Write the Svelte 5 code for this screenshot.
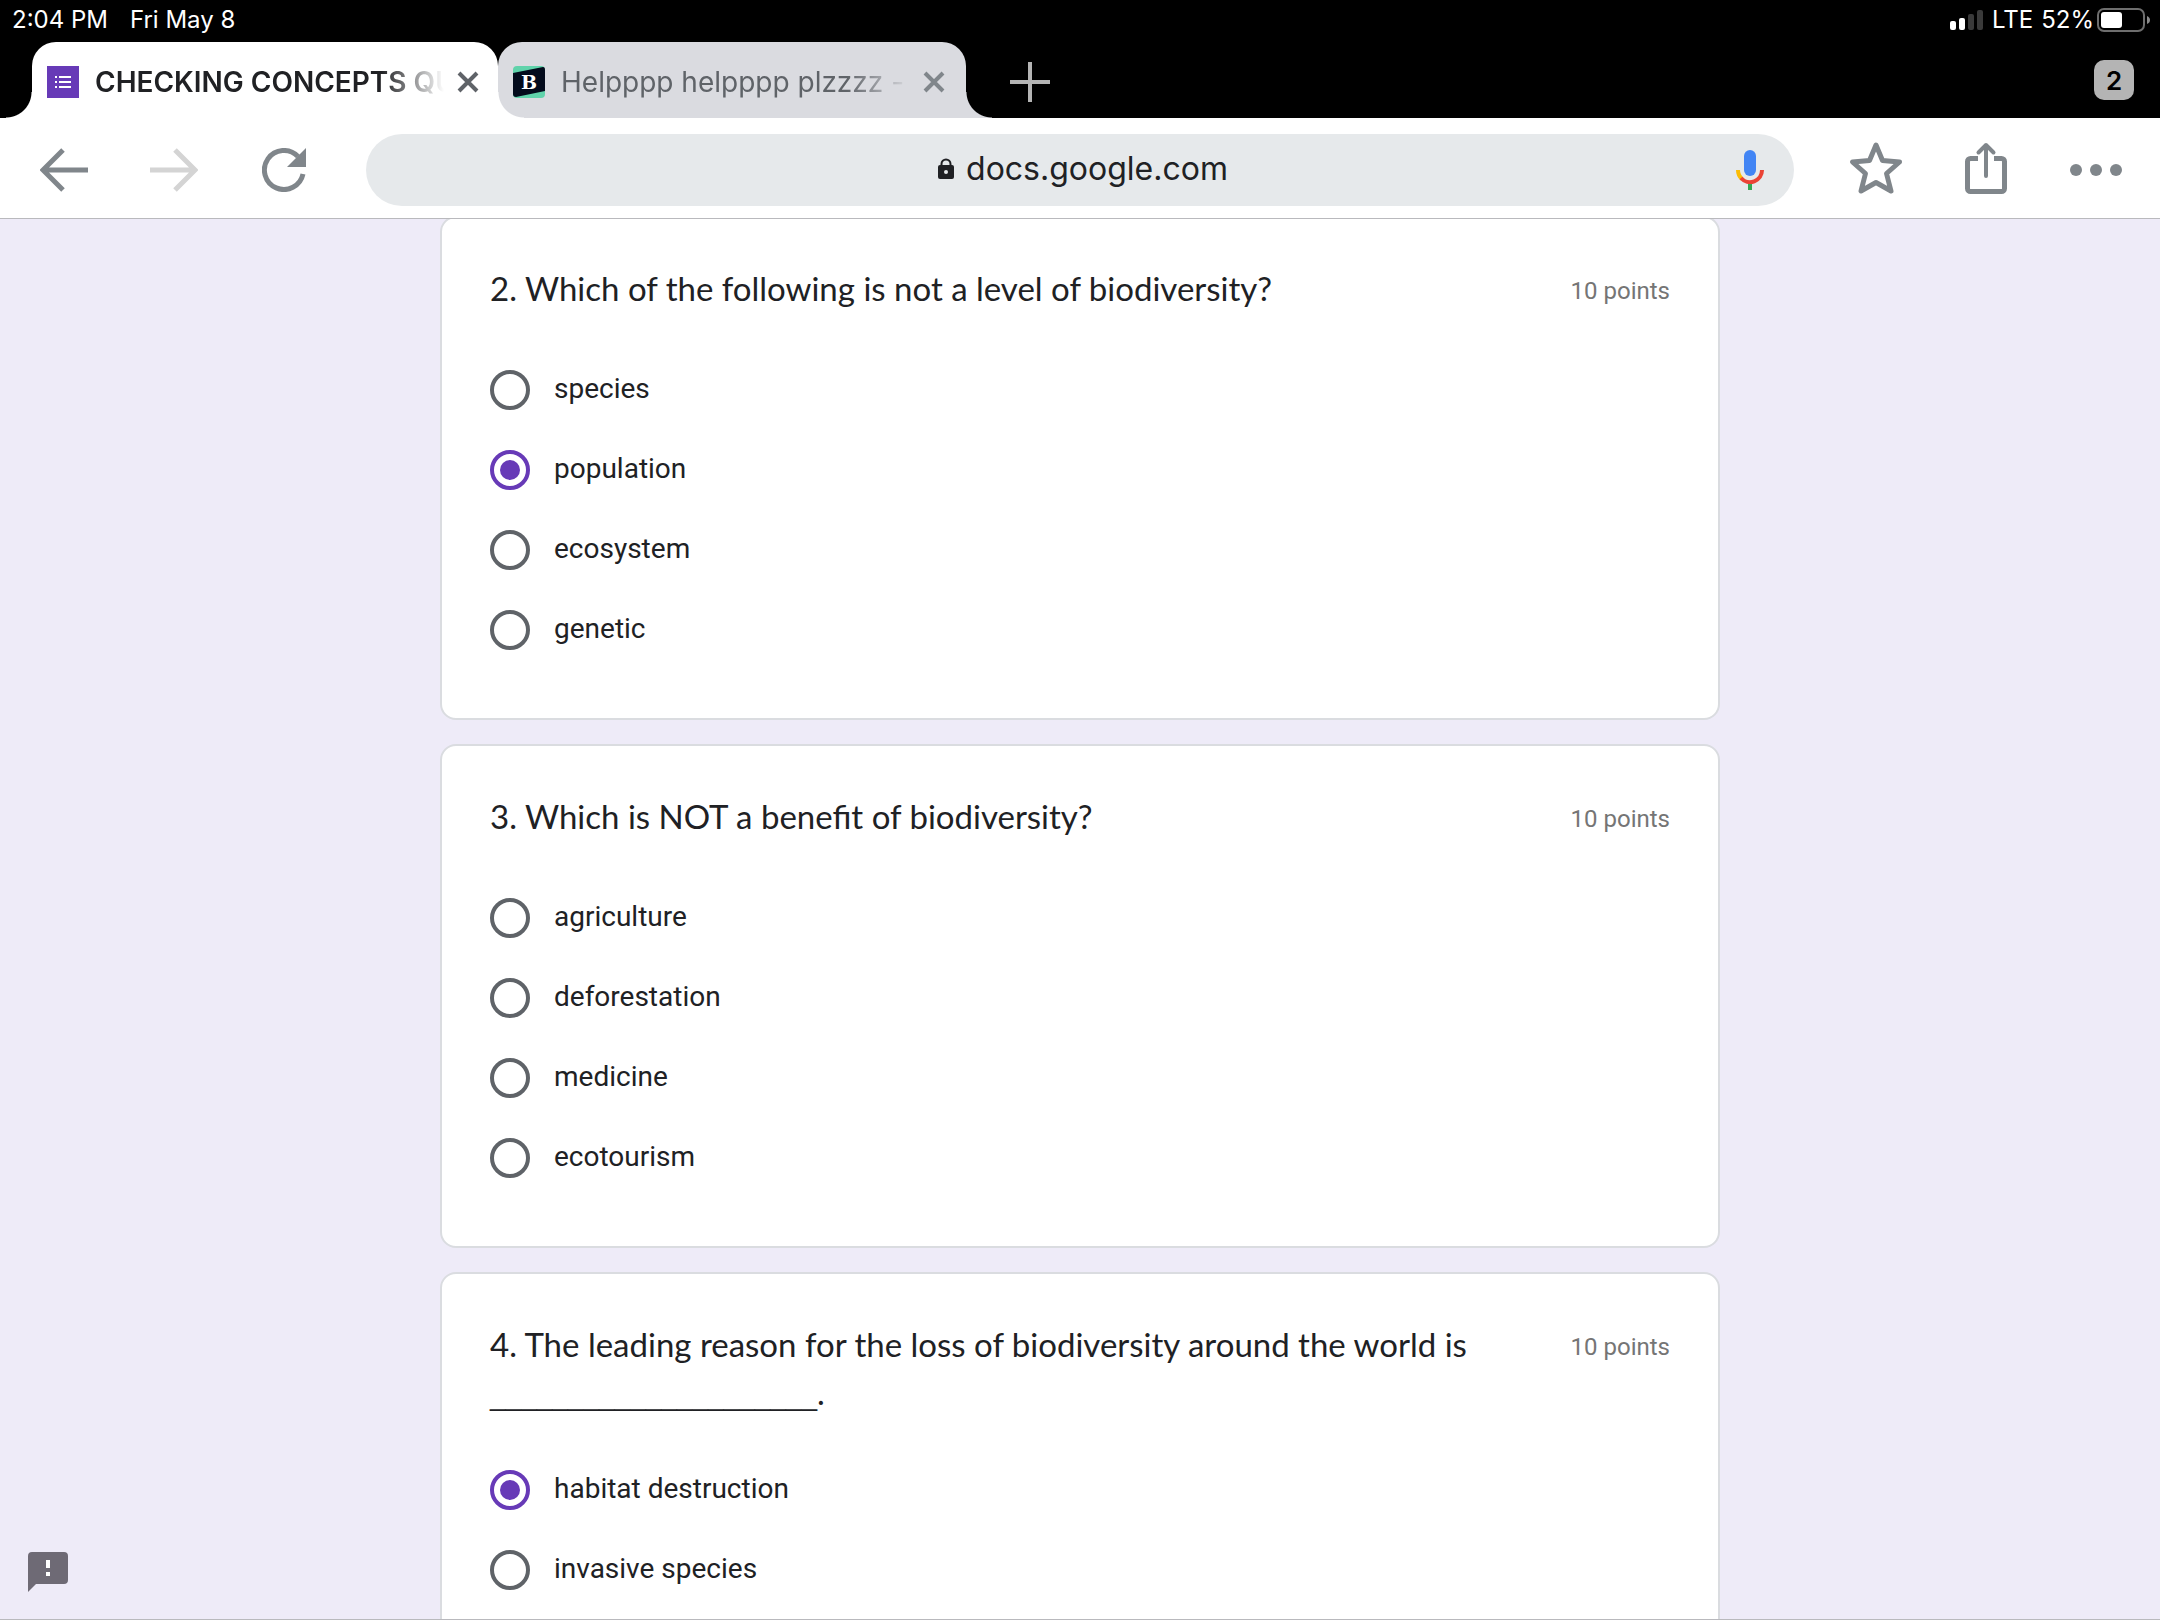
<script lang="ts">
  interface Question {
    id: number;
    title: string;
    blank?: string;
    points: number;
    options: string[];
    answer: string;
  }

  let questions: Question[] = $state([
    {
      id: 2,
      title: "2. Which of the following is not a level of biodiversity?",
      points: 10,
      options: ["species", "population", "ecosystem", "genetic"],
      answer: "population",
    },
    {
      id: 3,
      title: "3. Which is NOT a benefit of biodiversity?",
      points: 10,
      options: ["agriculture", "deforestation", "medicine", "ecotourism"],
      answer: "",
    },
    {
      id: 4,
      title: "4. The leading reason for the loss of biodiversity around the world is",
      blank: "_____________________",
      points: 10,
      options: ["habitat destruction", "invasive species"],
      answer: "habitat destruction",
    },
  ]);

  let address = $state("docs.google.com");
</script>

<div class="browser">
  <div class="status-bar">
    <div class="status-group">
      <span>2:04 PM</span>
      <span>Fri May 8</span>
    </div>
    <div class="status-icons">
      <svg class="signal" width="34" height="20" viewBox="0 0 34 20" aria-hidden="true">
        <rect x="0" y="11" width="6" height="9" rx="2" fill="#fff" />
        <rect x="9" y="8" width="6" height="12" rx="2" fill="#fff" />
        <rect x="18" y="4" width="6" height="16" rx="2" fill="#3a3a3a" />
        <rect x="27" y="0" width="6" height="20" rx="2" fill="#3a3a3a" />
      </svg>
      <span>LTE</span>
      <span class="percent">52%</span>
      <svg width="54" height="24" viewBox="0 0 54 24" aria-hidden="true">
        <rect x="1" y="1" width="46" height="22" rx="6" fill="none" stroke="#6e6e6e" stroke-width="2" />
        <rect x="4" y="4" width="21" height="16" rx="3" fill="#fff" />
        <path d="M50 8c2 1 3 2 3 4s-1 3-3 4z" fill="#8a8a8a" />
      </svg>
    </div>
  </div>

  <div class="tab-strip">
    <div class="tab active">
      <svg class="favicon" width="32" height="32" viewBox="0 0 32 32" aria-hidden="true">
        <rect width="32" height="32" fill="#673ab7" />
        <path d="M12 11h12M12 16h12M12 21h12M8 11h2M8 16h2M8 21h2" stroke="#fff" stroke-width="2" />
      </svg>
      <span class="tab-title">CHECKING CONCEPTS QU</span>
      <button class="close" aria-label="Close tab">
        <svg width="24" height="24" viewBox="0 0 24 24">
          <path d="M3 3l18 18M21 3L3 21" stroke="#5f6368" stroke-width="4" />
        </svg>
      </button>
    </div>
    <div class="tab inactive">
      <svg class="favicon" width="32" height="32" viewBox="0 0 32 32" aria-hidden="true">
        <rect width="32" height="32" rx="4" fill="#60d3ab" />
        <path d="M0 7L30 1q2 0 2 3v21L3 31q-3 0-3-3z" fill="#030b1c" />
        <text x="16" y="23" text-anchor="middle" font-family="DejaVu Serif, serif" font-weight="700" font-size="19" fill="#fff">B</text>
      </svg>
      <span class="tab-title">Helpppp helpppp plzzzz -</span>
      <button class="close" aria-label="Close tab">
        <svg width="24" height="24" viewBox="0 0 24 24">
          <path d="M3 3l18 18M21 3L3 21" stroke="#80868b" stroke-width="4" />
        </svg>
      </button>
    </div>
    <button class="new-tab" aria-label="New tab">
      <svg width="40" height="40" viewBox="0 0 40 40">
        <path d="M20 0v40M0 20h40" stroke="#b4b4b4" stroke-width="4" />
      </svg>
    </button>
    <button class="tab-count" aria-label="Show open tabs">2</button>
  </div>

  <div class="toolbar">
    <button class="tool" aria-label="Back">
      <svg width="48" height="44" viewBox="0 0 48 44">
        <path d="M48 22H4M23 2L3 22l20 20" fill="none" stroke="#80868b" stroke-width="5" />
      </svg>
    </button>
    <button class="tool" aria-label="Forward">
      <svg width="48" height="44" viewBox="0 0 48 44">
        <path d="M0 22h44M25 2l20 20-20 20" fill="none" stroke="#d4d4d4" stroke-width="5" />
      </svg>
    </button>
    <button class="tool" aria-label="Reload">
      <svg width="44" height="44" viewBox="0 0 44 44">
        <path d="M41 26A19.500 19.500 0 1 1 36 8.500" fill="none" stroke="#80868b" stroke-width="5" />
        <path d="M44 0v19H25z" fill="#80868b" />
      </svg>
    </button>
    <div class="omnibox">
      <div class="address">
        <svg width="16" height="22" viewBox="0 0 16 22" aria-hidden="true">
          <path d="M3.500 9V6a4.500 4.500 0 0 1 9 0v3" fill="none" stroke="#202124" stroke-width="2" />
          <path d="M2 7h12a2 2 0 0 1 2 2v10a2 2 0 0 1-2 2H2a2 2 0 0 1-2-2V9a2 2 0 0 1 2-2z" fill="#202124" />
          <circle cx="8" cy="14" r="2" fill="#e6e9eb" />
        </svg>
        <input type="text" aria-label="Address" bind:value={address} />
      </div>
      <button class="mic" aria-label="Voice search">
        <svg width="28" height="40" viewBox="0 0 28 40">
          <path d="M14 32v8" stroke="#34a853" stroke-width="4" />
          <path d="M2 20a12 12 0 0 0 4 9" fill="none" stroke="#fbbc05" stroke-width="4" />
          <path d="M5 28a12 12 0 0 0 21-8" fill="none" stroke="#ea4335" stroke-width="4" />
          <rect x="8" y="0" width="12" height="26" rx="6" fill="#4285f4" />
        </svg>
      </button>
    </div>
    <button class="tool" aria-label="Bookmark">
      <svg width="56" height="60" viewBox="0 0 56 60">
        <path
          d="M28 5l6.500 15.500L51.500 22 38.500 33.500 43 51 28 42.500 13 51l4.500-17.500L4.500 22l17-1.500z"
          fill="none"
          stroke="#80868b"
          stroke-width="5"
          stroke-linejoin="round"
        />
      </svg>
    </button>
    <button class="tool" aria-label="Share">
      <svg width="44" height="60" viewBox="0 0 44 60">
        <g fill="none" stroke="#80868b" stroke-linejoin="round">
          <path d="M14 18.500H6.500a3 3 0 0 0-3 3v27a3 3 0 0 0 3 3h31a3 3 0 0 0 3-3v-27a3 3 0 0 0-3-3H30" stroke-width="5" />
          <path d="M22 5v31M14.500 12.500L22 5l7.500 7.500" stroke-width="4" stroke-linecap="round" />
        </g>
      </svg>
    </button>
    <button class="tool" aria-label="More">
      <svg width="52" height="12" viewBox="0 0 52 12" fill="#80868b">
        <circle cx="6" cy="6" r="6" />
        <circle cx="26" cy="6" r="6" />
        <circle cx="46" cy="6" r="6" />
      </svg>
    </button>
  </div>

  <main>
    <form>
      {#each questions as question (question.id)}
        <div class="card" role="radiogroup" aria-labelledby="question-{question.id}">
          <div class="heading">
            <h2 id="question-{question.id}">
              {question.title}
              {#if question.blank}
                <span class="blank">{question.blank}</span>.
              {/if}
            </h2>
            <span class="points">{question.points} points</span>
          </div>
          <div class="options">
            {#each question.options as option}
              <label>
                <input type="radio" name="question-{question.id}" value={option} bind:group={question.answer} />
                <span>{option}</span>
              </label>
            {/each}
          </div>
        </div>
      {/each}
    </form>
    <button class="report" aria-label="Report a problem">
      <svg width="40" height="40" viewBox="0 0 40 40">
        <path d="M4 0h32a4 4 0 0 1 4 4v24a4 4 0 0 1-4 4H8l-8 8V4a4 4 0 0 1 4-4z" fill="#6e6a75" />
        <path d="M20 8v8M20 20v4" stroke="#fff" stroke-width="4" />
      </svg>
    </button>
  </main>
</div>

<style>
  :global(body) {
    margin: 0;
  }

  .browser {
    display: flex;
    flex-direction: column;
    height: 100vh;
    font-family: Inter, "Liberation Sans", sans-serif;
    color: #202124;
  }

  button {
    display: flex;
    align-items: center;
    justify-content: center;
    padding: 0;
    border: none;
    background: none;
    font: inherit;
    cursor: pointer;
  }

  .status-bar {
    display: flex;
    flex: none;
    justify-content: space-between;
    height: 42px;
    padding: 0 9px 0 12px;
    background: #000;
    color: #fff;
    font-size: 24px;
    line-height: 40px;
  }

  .status-group {
    display: flex;
    gap: 22px;
  }

  .status-icons {
    display: flex;
    align-items: center;
    height: 40px;
  }

  .signal {
    margin-right: 8px;
  }

  .percent {
    margin: 0 3px 0 8px;
  }

  .tab-strip {
    display: flex;
    flex: none;
    align-items: center;
    height: 76px;
    padding: 0 26px 0 32px;
    background: #000;
  }

  .tab {
    position: relative;
    display: flex;
    align-items: center;
    box-sizing: border-box;
    width: 468px;
    height: 76px;
    padding: 3px 20px 0 15px;
    border-radius: 24px 24px 0 0;
    font-size: 28px;
    line-height: 36px;
  }

  .active {
    z-index: 1;
    width: 466px;
    padding-right: 18px;
    background: #fff;
    font-weight: 600;
  }

  .inactive {
    background: #dadbe0;
    color: #5f6368;
  }

  .active::before,
  .active::after,
  .inactive::after {
    content: "";
    position: absolute;
    bottom: 0;
    width: 26px;
    height: 26px;
  }

  .active::before {
    right: 100%;
    background: radial-gradient(circle at 0 0, transparent 25px, #fff 26px);
  }

  .active::after {
    left: 100%;
    background: radial-gradient(circle at 100% 0, transparent 25px, #fff 26px);
  }

  .inactive::after {
    left: 100%;
    background: radial-gradient(circle at 100% 0, transparent 25px, #dadbe0 26px);
  }

  .favicon {
    flex: none;
    margin-right: 16px;
  }

  /* long titles fade out before the close button */
  .tab-title {
    flex: 1;
    min-width: 0;
    white-space: nowrap;
    -webkit-mask-image: linear-gradient(to right, #000 82%, transparent 100%);
    mask-image: linear-gradient(to right, #000 82%, transparent 100%);
  }

  .close {
    flex: none;
    margin-left: 12px;
  }

  .new-tab {
    box-sizing: border-box;
    width: 80px;
    height: 76px;
    margin-left: 24px;
    padding-top: 3px;
  }

  .tab-count {
    width: 40px;
    height: 40px;
    margin-left: auto;
    border-radius: 10px;
    background: #b4b4b4;
    font-size: 26px;
    font-weight: 600;
    color: #000;
  }

  .toolbar {
    display: flex;
    flex: none;
    align-items: center;
    padding: 16px 9px 12px;
    border-bottom: 1px solid #b9b9bd;
    background: #fff;
    z-index: 1;
  }

  .tool {
    width: 110px;
    height: 72px;
  }

  .omnibox {
    display: grid;
    flex: 1;
    grid-template-columns: 1fr auto 1fr;
    align-items: center;
    height: 72px;
    margin: 0 27px;
    border-radius: 36px;
    background: #e6e9eb;
  }

  .address {
    display: flex;
    grid-column: 2;
    align-items: center;
    gap: 12px;
    padding: 0 0 2px 6px;
  }

  .address input {
    field-sizing: content;
    padding: 0;
    border: none;
    outline: none;
    background: none;
    color: inherit;
    font: inherit;
    font-size: 32px;
    line-height: 44px;
  }

  .mic {
    justify-self: end;
    width: 88px;
    height: 72px;
  }

  main {
    position: relative;
    flex: 1;
    min-height: 0;
    overflow: hidden;
    border-bottom: 1px solid #b9b9bd;
    background: #eeebf8;
    font-family: Roboto, sans-serif;
  }

  form {
    display: flex;
    flex-direction: column;
    gap: 24px;
    max-width: 1280px;
    margin: -3px auto 0;
  }

  .card {
    padding: 46px 48px 48px;
    border: 2px solid #dadce0;
    border-radius: 16px;
    background: #fff;
  }

  .heading {
    display: flex;
    align-items: flex-start;
    justify-content: space-between;
    gap: 32px;
    min-height: 54px;
  }

  h2 {
    max-width: 1010px;
    margin: 0 0 2px;
    font-family: "Google Sans", Lato, Roboto, sans-serif;
    font-size: 33px;
    font-weight: 400;
    line-height: 48px;
  }

  .blank {
    font-family: "Liberation Sans", sans-serif;
    font-size: 28px;
    line-height: 40px;
  }

  .points {
    flex: none;
    color: #757575;
    font-size: 24px;
    line-height: 54px;
  }

  .options {
    margin-top: 32px;
  }

  label {
    display: flex;
    align-items: center;
    gap: 24px;
    height: 80px;
    font-size: 28px;
    line-height: 40px;
  }

  label span {
    padding-bottom: 2px;
  }

  label input {
    display: grid;
    place-content: center;
    appearance: none;
    width: 40px;
    height: 40px;
    margin: 0;
    border: 4px solid #5f6368;
    border-radius: 50%;
  }

  label input:checked {
    border-color: #673ab7;
  }

  label input:checked::before {
    content: "";
    width: 20px;
    height: 20px;
    border-radius: 50%;
    background: #673ab7;
  }

  .report {
    position: absolute;
    bottom: 27px;
    left: 28px;
  }
</style>
